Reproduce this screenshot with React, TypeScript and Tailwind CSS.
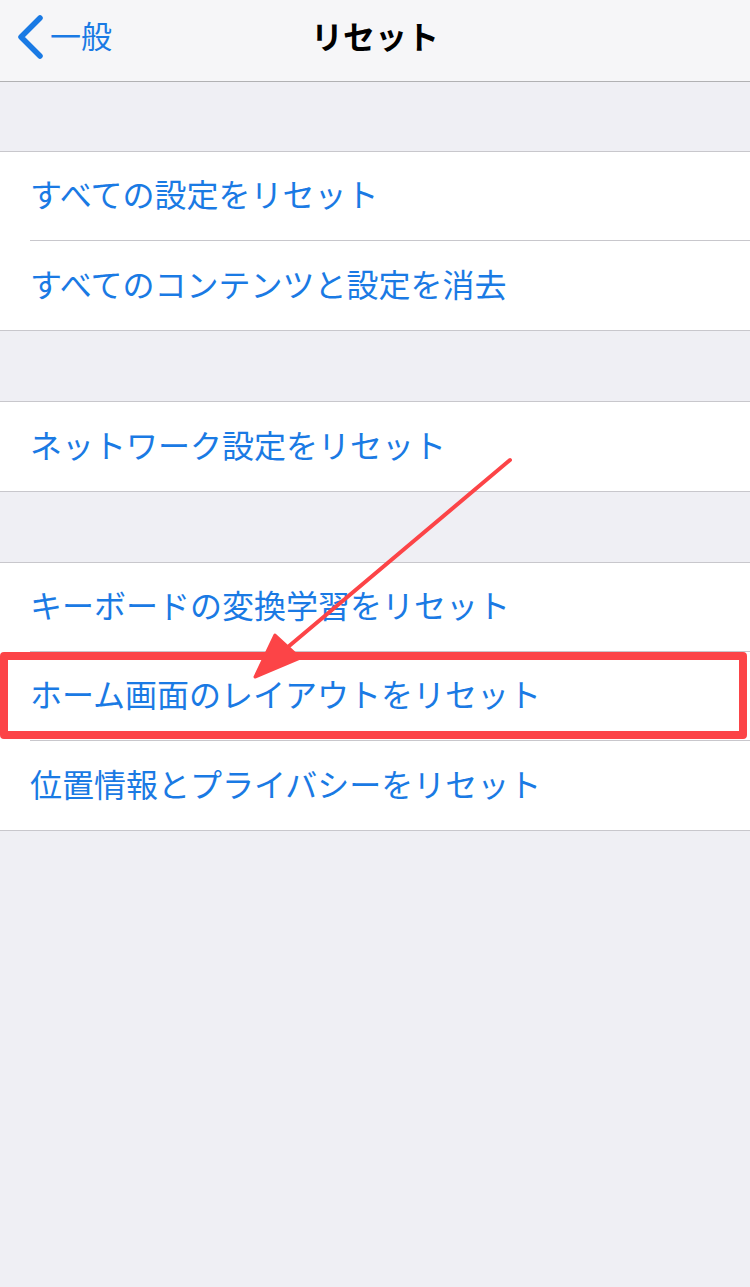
const font = "font-['Noto_Sans_CJK_JP','Noto_Sans',sans-serif]";

type Row = { label: string; highlight?: boolean };

const groups: Row[][] = [
  [{ label: 'すべての設定をリセット' }, { label: 'すべてのコンテンツと設定を消去' }],
  [{ label: 'ネットワーク設定をリセット' }],
  [
    { label: 'キーボードの変換学習をリセット' },
    { label: 'ホーム画面のレイアウトをリセット', highlight: true },
    { label: '位置情報とプライバシーをリセット' },
  ],
];

function Group({ rows }: { rows: Row[] }) {
  return (
    <div className="bg-white border-y border-[#c8c7cc]">
      {rows.map((row, i) => (
        <div key={row.label} className="relative h-[89px] pl-[30px]">
          <div
            className={`h-full flex items-center pb-[6px] ${
              i < rows.length - 1 ? 'border-b border-[#c8c7cc]' : ''
            }`}
          >
            <span className="text-[32px] leading-none text-[#1a7ae4]">{row.label}</span>
          </div>
          {row.highlight && (
            <div className="absolute left-0 top-0 w-[747px] h-[87px] border-[8px] border-[#fc4447] rounded-[4px]" />
          )}
        </div>
      ))}
    </div>
  );
}

export default function App() {
  return (
    <div className={`relative w-[750px] h-[1287px] bg-[#efeff4] ${font}`}>
      <div className="h-[82px] bg-[#f6f6f8] border-b border-[#b1b1b3] flex items-center relative">
        <div className="flex items-center pl-[15px] pb-[8px]">
          <svg width="30" height="46" viewBox="0 0 30 46" className="mr-[5px]">
            <path d="M25 4 L6 23 L25 42" fill="none" stroke="#1a7ae4" strokeWidth="5.5" strokeLinecap="round" strokeLinejoin="round" />
          </svg>
          <span className="text-[31px] leading-none text-[#1a7ae4] mt-[-4px]">一般</span>
        </div>
        <div className="absolute inset-x-0 top-0 h-full flex items-center justify-center pointer-events-none pb-[12px]">
          <span className="text-[32px] leading-none font-bold text-black">リセット</span>
        </div>
      </div>
      <div className="h-[69px]" />
      <Group rows={groups[0]} />
      <div className="h-[70px]" />
      <Group rows={groups[1]} />
      <div className="h-[70px]" />
      <Group rows={groups[2]} />

      <svg className="absolute left-0 top-0 pointer-events-none" width="750" height="1287">
        <line x1="510" y1="460" x2="282" y2="652" stroke="#fc4447" strokeWidth="4" strokeLinecap="round" />
        <polygon points="255,677 275,635 300,658" fill="#fc4447" stroke="#fc4447" strokeWidth="3" strokeLinejoin="round" />
      </svg>
    </div>
  );
}
